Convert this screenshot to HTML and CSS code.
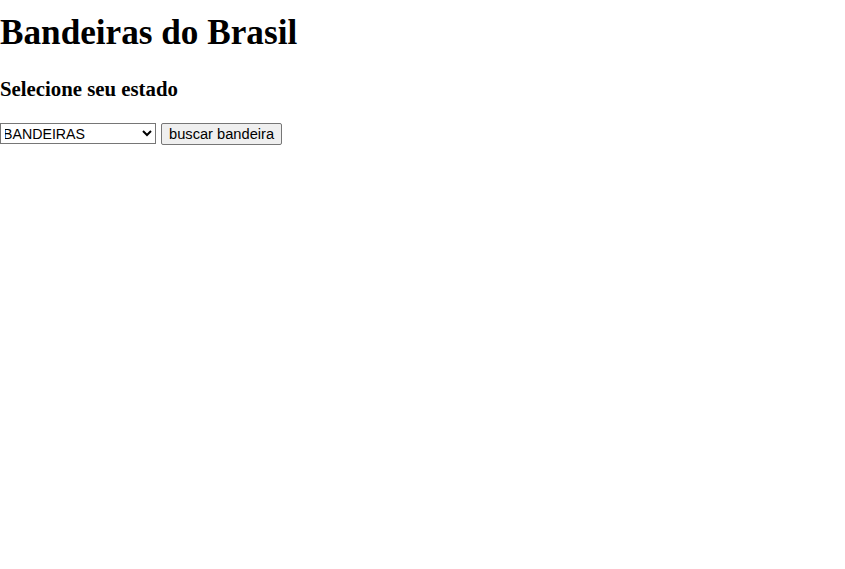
FILE: index.html
```html
<!DOCTYPE html>
<html lang="pt-BR">
<head>
<meta charset="utf-8">
<title>Bandeiras do Brasil</title>
<link rel="stylesheet" href="styles.css">
</head>
<body>
<h1 class="title">Bandeiras do Brasil</h1>
<h3 class="subtitle">Selecione seu estado</h3>
<div class="controls">
<select class="state-select">
<option>BANDEIRAS</option>
<option>Acre</option>
<option>Alagoas</option>
<option>Amapá</option>
<option>Amazonas</option>
<option>Bahia</option>
</select>
<button class="search-btn">buscar bandeira</button>
</div>
</body>
</html>
```
FILE: styles.css
```css
body {
  margin: 0;
  font-family: "Liberation Serif", "Times New Roman", serif;
  background: #fff;
  color: #000;
}
.title {
  font-size: 35.2px;
  line-height: 39px;
  margin: 12.5px 0 0;
}
.subtitle {
  font-size: 20.8px;
  line-height: 23px;
  margin: 25px 0 0;
}
.controls {
  display: flex;
  align-items: center;
  gap: 5px;
  margin-top: 23px;
}
.state-select {
  width: 156px;
  height: 21px;
  font-family: "Liberation Sans", Arial, sans-serif;
  font-size: 14.2px;
  text-indent: -2px;
  border: 1px solid #767676;
  border-radius: 0;
  background: #fff;
  color: #000;
  padding: 0;
}
.search-btn {
  height: 22px;
  font-family: "Liberation Sans", Arial, sans-serif;
  font-size: 14.67px;
  line-height: 16px;
  border: 1px solid #767676;
  border-radius: 2px;
  background: #efefef;
  color: #000;
  padding: 1px 7px;
}
```
